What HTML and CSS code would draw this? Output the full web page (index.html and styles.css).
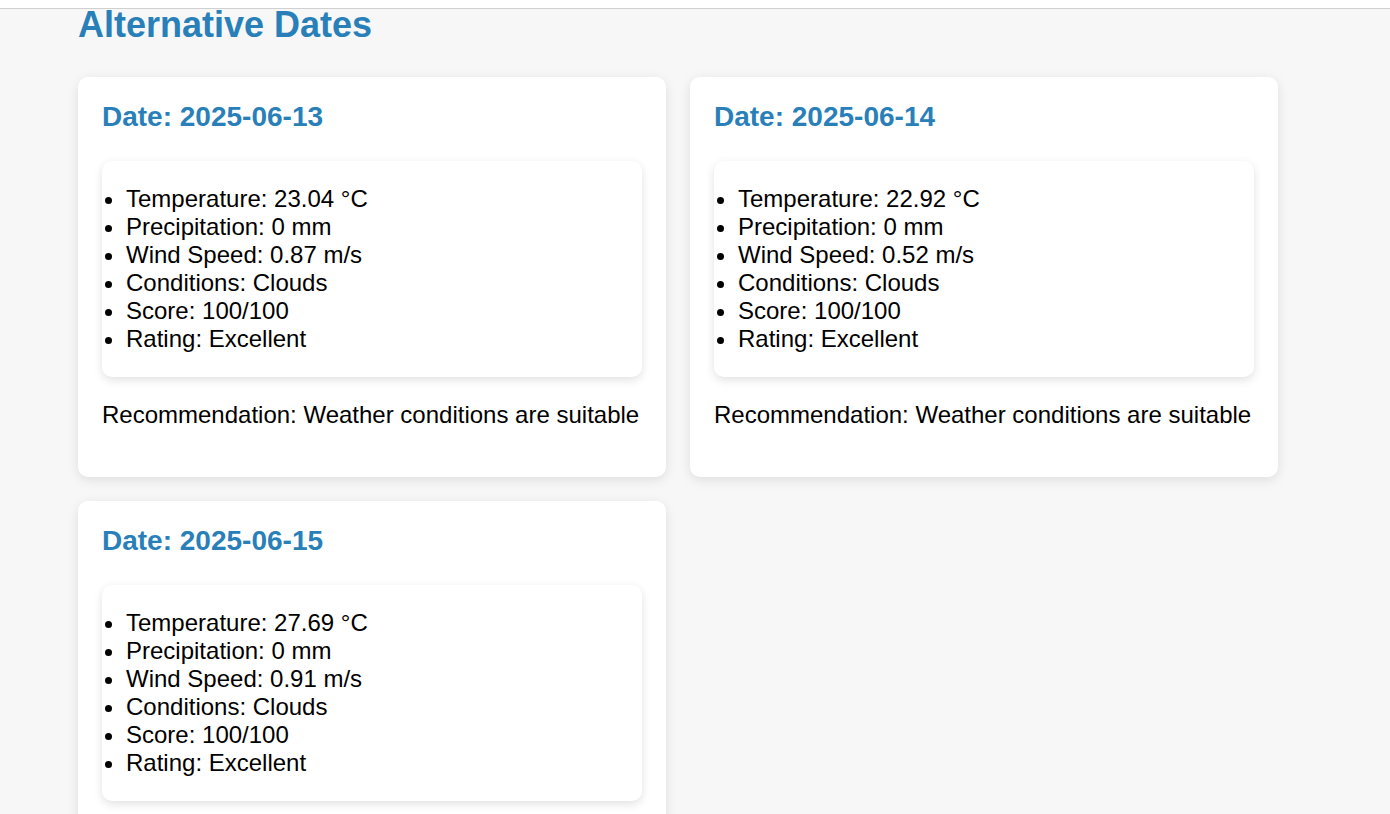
FILE: index.html
```html
<!DOCTYPE html>
<html lang="en">
<head>
<meta charset="utf-8">
<title>Alternative Dates</title>
<link rel="stylesheet" href="styles.css">
</head>
<body>
<div class="topbar"></div>
<main class="page">
  <h2 class="page-title">Alternative Dates</h2>
  <div class="grid">
    <section class="card">
      <h3 class="card-title">Date: 2025-06-13</h3>
      <div class="details">
        <ul>
          <li>Temperature: 23.04 °C</li>
          <li>Precipitation: 0 mm</li>
          <li>Wind Speed: 0.87 m/s</li>
          <li>Conditions: Clouds</li>
          <li>Score: 100/100</li>
          <li>Rating: Excellent</li>
        </ul>
      </div>
      <p class="rec">Recommendation: Weather conditions are suitable</p>
    </section>
    <section class="card">
      <h3 class="card-title">Date: 2025-06-14</h3>
      <div class="details">
        <ul>
          <li>Temperature: 22.92 °C</li>
          <li>Precipitation: 0 mm</li>
          <li>Wind Speed: 0.52 m/s</li>
          <li>Conditions: Clouds</li>
          <li>Score: 100/100</li>
          <li>Rating: Excellent</li>
        </ul>
      </div>
      <p class="rec">Recommendation: Weather conditions are suitable</p>
    </section>
    <section class="card">
      <h3 class="card-title">Date: 2025-06-15</h3>
      <div class="details">
        <ul>
          <li>Temperature: 27.69 °C</li>
          <li>Precipitation: 0 mm</li>
          <li>Wind Speed: 0.91 m/s</li>
          <li>Conditions: Clouds</li>
          <li>Score: 100/100</li>
          <li>Rating: Excellent</li>
        </ul>
      </div>
      <p class="rec">Recommendation: Weather conditions are suitable</p>
    </section>
  </div>
</main>
</body>
</html>
```

FILE: styles.css
```css
html, body {
  margin: 0;
  padding: 0;
}
body {
  background: #f7f7f7;
  font-family: "Liberation Sans", Arial, sans-serif;
  color: #000;
  font-size: 24px;
}
.topbar {
  height: 8px;
  background: #fff;
  border-bottom: 1px solid #d0d0d0;
}
.page {
  padding: 0 78px;
}
.page-title {
  margin: 0 0 36px;
  font-size: 36px;
  line-height: 32px;
  font-weight: bold;
  color: #2980b9;
}
.grid {
  display: grid;
  grid-template-columns: 588px 588px;
  gap: 24px;
}
.card {
  background: #fff;
  border-radius: 10px;
  box-shadow: 0 3px 12px rgba(0, 0, 0, 0.1);
  padding: 24px;
}
.card-title {
  margin: 0 0 28px;
  font-size: 28px;
  font-weight: bold;
  color: #2980b9;
}
.details {
  background: #fff;
  border-radius: 10px;
  box-shadow: 0 3px 10px rgba(0, 0, 0, 0.12);
}
.details ul {
  margin: 0;
  padding: 24px 0 24px 24px;
  line-height: 28px;
}
.rec {
  margin: 24px 0;
  line-height: 28px;
}
```
